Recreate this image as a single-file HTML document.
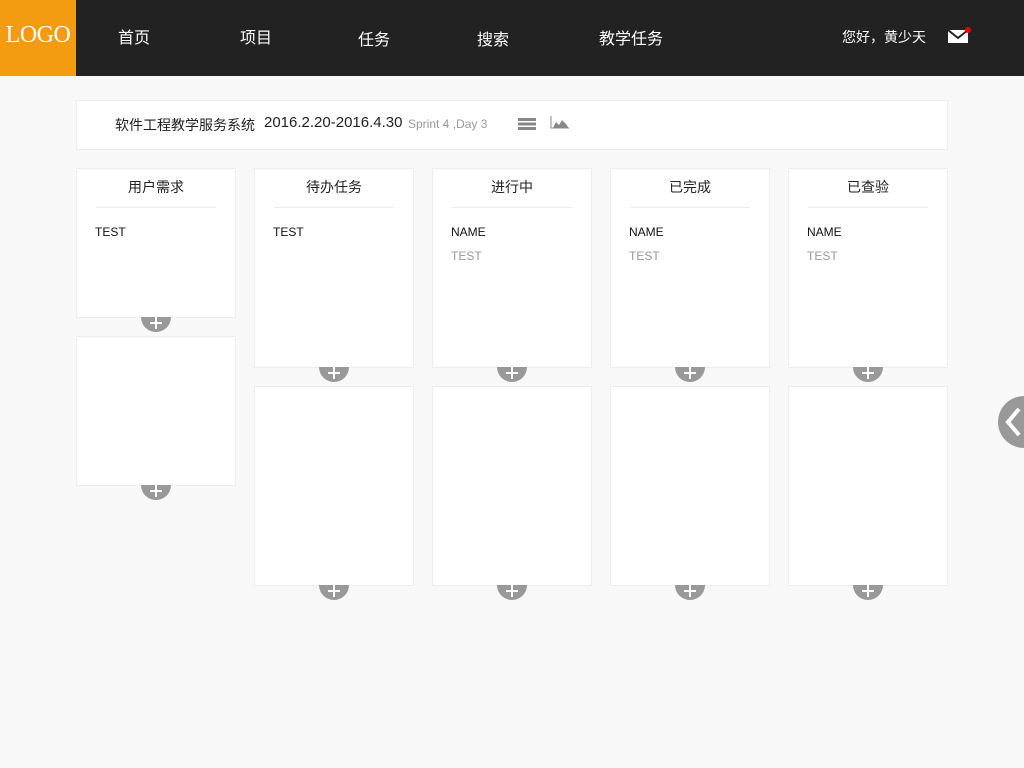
<!DOCTYPE html><html><head><meta charset="utf-8"><style>
body{margin:0;width:1024px;height:768px;background:#f8f8f8;font-family:"Liberation Sans","Noto Sans CJK SC",sans-serif;position:relative;overflow:hidden}
.top{position:absolute;left:0;top:0;width:1024px;height:76px;background:#222}
.logo{position:absolute;left:0;top:0;width:76px;height:76px;background:#f39c12;color:#fff;font-family:"Liberation Serif",serif;font-size:24px;line-height:70px;text-align:center;letter-spacing:-0.5px}
.nav{position:absolute;top:24px;color:#fff;font-size:16px}
.bar{position:absolute;left:76px;top:100px;width:870px;height:48px;background:#fff;border:1px solid #eee}
.card{position:absolute;width:160px;background:#fff;border:1px solid #eee;box-sizing:border-box}
.card h3{margin:0 19px;font-weight:normal;font-size:14px;text-align:center;color:#222;height:38px;line-height:36px;border-bottom:1px solid #eee}
.n{position:absolute;left:18px;top:56px;font-size:12px;color:#111}
.t{position:absolute;left:18px;top:80px;font-size:12px;color:#999}
.plus{position:absolute;width:30px;height:15px;overflow:hidden}
.plus div{width:30px;height:30px;border-radius:50%;background:#999;margin-top:-15px;position:relative}
.plus div:before{content:"";position:absolute;left:9px;top:20px;width:12px;height:2px;background:#fff}
.plus div:after{content:"";position:absolute;left:14px;top:15px;width:2px;height:12px;background:#fff}
</style></head><body>
<div class="top"></div><div class="logo">LOGO</div>
<div class="nav" style="left:118px">首页</div><div class="nav" style="left:240px">项目</div><div class="nav" style="left:358px;top:26px">任务</div><div class="nav" style="left:477px;top:26px">搜索</div><div class="nav" style="left:599px;top:25px">教学任务</div>
<div class="nav" style="left:842px;top:27px;font-size:14px">您好，黄少天</div>
<svg style="position:absolute;left:947px;top:27px" width="26" height="18"><rect x="1" y="3" width="20" height="13" fill="#fff"/><path d="M1 3 L11 11 L21 3" stroke="#222" stroke-width="2" fill="none"/><circle cx="21" cy="3" r="3" fill="#e00"/></svg>
<div class="bar"><span style="position:absolute;left:38px;top:14px;font-size:14px;color:#222">软件工程教学服务系统</span><span style="position:absolute;left:187px;top:13px;font-size:15px;color:#222">2016.2.20-2016.4.30</span><span style="position:absolute;left:331px;top:16px;font-size:12px;color:#999">Sprint 4 ,Day 3</span>
<svg style="position:absolute;left:441px;top:16px" width="18" height="14"><rect y="1" width="18" height="3" fill="#888"/><rect y="5.5" width="18" height="3" fill="#888"/><rect y="10" width="18" height="3" fill="#888"/></svg>
<svg style="position:absolute;left:473px;top:14px" width="19" height="14"><path d="M1 1 V13 H19" stroke="#888" fill="none"/><path d="M3 13 L6 7 L9 10 L12 5 L16 9 L18 12 V13Z" fill="#888"/></svg></div>

<div class="card" style="left:76px;top:168px;height:150px"><h3>用户需求</h3><div class="n">TEST</div></div>
<div class="plus" style="left:141px;top:317px"><div></div></div>
<div class="card" style="left:76px;top:336px;height:150px"></div>
<div class="plus" style="left:141px;top:485px"><div></div></div>

<div class="card" style="left:254px;top:168px;height:200px"><h3>待办任务</h3><div class="n">TEST</div></div>
<div class="card" style="left:432px;top:168px;height:200px"><h3>进行中</h3><div class="n">NAME</div><div class="t">TEST</div></div>
<div class="card" style="left:610px;top:168px;height:200px"><h3>已完成</h3><div class="n">NAME</div><div class="t">TEST</div></div>
<div class="card" style="left:788px;top:168px;height:200px"><h3>已查验</h3><div class="n">NAME</div><div class="t">TEST</div></div>
<div class="card" style="left:254px;top:386px;height:200px"></div>
<div class="card" style="left:432px;top:386px;height:200px"></div>
<div class="card" style="left:610px;top:386px;height:200px"></div>
<div class="card" style="left:788px;top:386px;height:200px"></div>
<div class="plus" style="left:319px;top:367px"><div></div></div><div class="plus" style="left:497px;top:367px"><div></div></div><div class="plus" style="left:675px;top:367px"><div></div></div><div class="plus" style="left:853px;top:367px"><div></div></div>
<div class="plus" style="left:319px;top:585px"><div></div></div><div class="plus" style="left:497px;top:585px"><div></div></div><div class="plus" style="left:675px;top:585px"><div></div></div><div class="plus" style="left:853px;top:585px"><div></div></div>

<svg style="position:absolute;left:998px;top:396px" width="26" height="52"><circle cx="26" cy="26" r="26" fill="#999"/><path d="M21 13 L10 26 L21 39" stroke="#fff" stroke-width="4" fill="none"/></svg>
</body></html>
